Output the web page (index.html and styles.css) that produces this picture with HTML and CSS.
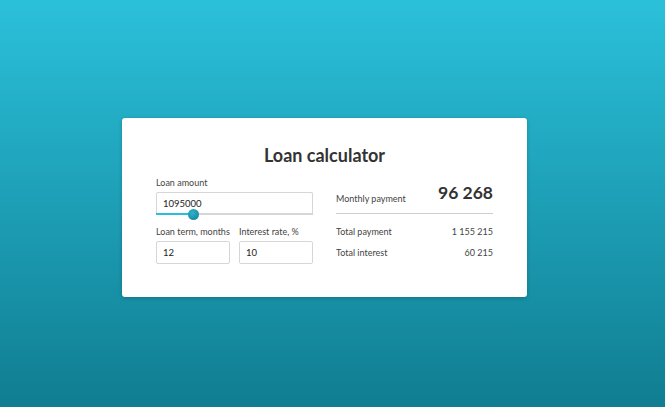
FILE: index.html
```html
<!DOCTYPE html>
<html>
<head>
<meta charset="utf-8">
<link rel="stylesheet" href="styles.css">
</head>
<body>
<div class="page">
  <div class="card">
    <h1 class="title">Loan calculator</h1>
    <div class="cols">
      <div class="left">
        <div class="field">
          <label class="label">Loan amount</label>
          <div class="input amount">1095000
            <div class="track"><div class="fill" style="width:37px"></div><div class="thumb" style="left:37px"></div></div>
          </div>
        </div>
        <div class="row2">
          <div class="field">
            <label class="label">Loan term, months</label>
            <div class="input">12</div>
          </div>
          <div class="field">
            <label class="label">Interest rate, %</label>
            <div class="input">10</div>
          </div>
        </div>
      </div>
      <div class="right">
        <div class="monthly">
          <span class="mlabel">Monthly payment</span>
          <span class="mvalue">96 268</span>
        </div>
        <div class="line first"><span>Total payment</span><span>1 155 215</span></div>
        <div class="line"><span>Total interest</span><span>60 215</span></div>
      </div>
    </div>
  </div>
</div>
</body>
</html>
```
FILE: styles.css
```css
html, body { margin: 0; padding: 0; }
body {
  font-family: Lato, "Liberation Sans", sans-serif;
  color: #3a3a3a;
}
.page {
  width: 665px;
  height: 407px;
  background: linear-gradient(to bottom, #2bc0da 0%, #1d9fb6 50%, #107d91 100%);
  display: flex;
  justify-content: flex-start;
  padding: 118px 0 0 122px;
  box-sizing: border-box;
}
.card {
  width: 405px;
  height: 179px;
  box-sizing: border-box;
  background: #fff;
  border-radius: 3px;
  box-shadow: 0 1px 4px rgba(0,0,0,0.2);
  padding: 25px 34px 0 34px;
}
.title {
  margin: 0;
  text-align: center;
  font-size: 18px;
  font-weight: 700;
  color: #333;
  line-height: 24px;
}
.cols {
  display: flex;
  gap: 23px;
  margin-top: 10px;
}
.left, .right { width: 157px; }
.field { display: flex; flex-direction: column; }
.label {
  font-size: 9px;
  color: #444;
  line-height: 12px;
  margin-bottom: 3px;
  white-space: nowrap;
}
.input {
  position: relative;
  height: 23px;
  box-sizing: border-box;
  border: 1px solid #d6d6d6;
  border-radius: 2px;
  font-size: 9.5px;
  color: #222;
  padding: 0 6px;
  line-height: 21px;
}
.amount { border-bottom: none; }
.track {
  position: absolute;
  left: -1px;
  right: -1px;
  bottom: 0;
  height: 2px;
  background: #d6d6d6;
}
.fill {
  position: absolute;
  left: 0; top: 0; bottom: 0;
  background: #2bc0da;
}
.thumb {
  position: absolute;
  top: -4px;
  width: 11px;
  height: 11px;
  margin-left: -5px;
  border-radius: 50%;
  background: radial-gradient(circle at 40% 35%, #2fb3cc, #107d91);
}
.row2 {
  display: flex;
  gap: 9px;
  margin-top: 11px;
}
.row2 .field { width: 74px; }
.monthly {
  display: flex;
  justify-content: space-between;
  align-items: center;
  height: 37px;
  box-sizing: border-box;
  padding-top: 4px;
  border-bottom: 1px solid #cfcfcf;
}
.mlabel { font-size: 9px; color: #444; margin-top: 2px; }
.mvalue { font-size: 17.5px; font-weight: 700; color: #333; margin-bottom: 8px; line-height: 22px; }
.line {
  display: flex;
  justify-content: space-between;
  font-size: 9px;
  color: #444;
  line-height: 12px;
  margin-top: 9px;
}
.line.first { margin-top: 12px; }
```
